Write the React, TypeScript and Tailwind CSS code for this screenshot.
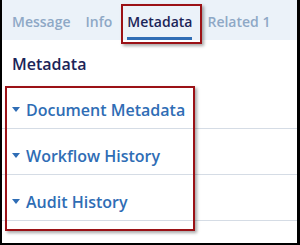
const TABS = [
  { label: 'Message', active: false },
  { label: 'Info', active: false },
  { label: 'Metadata', active: true },
  { label: 'Related 1', active: false },
];

const SECTIONS = ['Document Metadata', 'Workflow History', 'Audit History'];

function Caret() {
  return (
    <svg width="8" height="5" viewBox="0 0 8 5" className="shrink-0">
      <path d="M0 0 L8 0 L4 5 Z" fill="#2f6db5" />
    </svg>
  );
}

export default function App() {
  return (
    <div
      className="relative w-[300px] h-[245px] bg-white border-l-2 border-r-[3px] border-b-2 border-black overflow-hidden"
      style={{ fontFamily: '"Open Sans", sans-serif' }}
    >
      {/* Tabs */}
      <div className="h-[40px] bg-[#ebf2f9] flex items-start pl-[10px] gap-[15px] pt-[12px]">
        {TABS.map((tab) => (
          <div
            key={tab.label}
            className={`h-[28px] text-[14px] font-semibold leading-[20px] border-b-[3px] ${
              tab.active ? 'text-[#1b2458] border-[#2f6db5]' : 'text-[#8ea8c6] border-transparent'
            }`}
          >
            {tab.label}
          </div>
        ))}
      </div>

      {/* Heading */}
      <div className="pl-[10px] pt-[14px] h-[43px] text-[16px] font-semibold text-[#1b2458] leading-[20px]">
        Metadata
      </div>

      {/* Sections */}
      <div className="flex flex-col">
        {SECTIONS.map((s) => (
          <div
            key={s}
            className="h-[46px] flex items-center gap-[6px] pl-[10px] border-b border-[#d5dce5] pt-[8px]"
          >
            <Caret />
            <span className="text-[16px] font-semibold text-[#2f6db5] leading-[22px]">{s}</span>
          </div>
        ))}
      </div>

      {/* Annotation boxes */}
      <div className="absolute left-[119px] top-[4px] w-[81px] h-[40px] border-2 border-[#9b1116] shadow-[2px_2px_3px_rgba(0,0,0,0.35)]" />
      <div className="absolute left-[3px] top-[86px] w-[190px] h-[145px] border-2 border-[#9b1116] shadow-[2px_2px_3px_rgba(0,0,0,0.35)]" />
    </div>
  );
}
